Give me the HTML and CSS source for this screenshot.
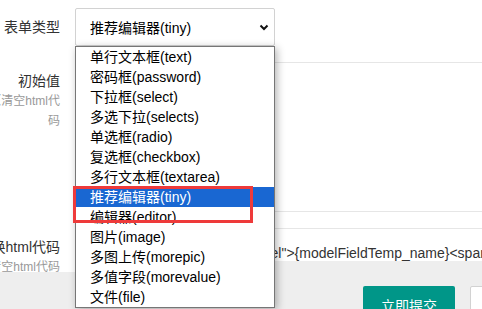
FILE: index.html
```html
<!DOCTYPE html>
<html lang="zh-CN">
<head>
    <meta charset="UTF-8">
    <title>字段设置</title>
    <link rel="stylesheet" href="styles.css">
</head>
<body>
    <div class="page">
        <form class="form">
            <div class="form-item">
                <label class="form-label">表单类型</label>
                <div class="input-block select-block">
                    <div class="select-box">
                        <span>推荐编辑器(tiny)</span>
                        <svg class="arrow" width="10" height="7" viewBox="0 0 10 7"><path d="M1.5 1.5 L5 5 L8.5 1.5" fill="none" stroke="#111" stroke-width="2"/></svg>
                    </div>
                    <ul class="select-options">
                        <li>单行文本框(text)</li>
                        <li>密码框(password)</li>
                        <li>下拉框(select)</li>
                        <li>多选下拉(selects)</li>
                        <li>单选框(radio)</li>
                        <li>复选框(checkbox)</li>
                        <li>多行文本框(textarea)</li>
                        <li class="selected">推荐编辑器(tiny)</li>
                        <li>编辑器(editor)</li>
                        <li>图片(image)</li>
                        <li>多图上传(morepic)</li>
                        <li>多值字段(morevalue)</li>
                        <li>文件(file)</li>
                    </ul>
                </div>
            </div>
            <div class="form-item">
                <label class="form-label">初始值<span class="form-tip">（清空html代码</span></label>
                <div class="input-block">
                    <div class="textarea"></div>
                </div>
            </div>
            <div class="form-item last">
                <label class="form-label">换html代码<span class="form-tip">清空html代码</span></label>
                <div class="input-block input-gray">
                    <div class="text-input">&lt;span class="model_field_label"&gt;{modelFieldTemp_name}&lt;span&gt;&lt;/span&gt;&lt;/span&gt;</div>
                </div>
            </div>
        </form>
        <div class="form-footer">
            <button type="button" class="btn">立即提交</button>
            <button type="button" class="btn btn-primary">重置</button>
        </div>
        <div class="mark"></div>
    </div>
</body>
</html>
```
FILE: styles.css
```css
body {
    margin: 0;
    font-family: "Liberation Sans", "Noto Sans CJK SC", sans-serif;
    font-size: 14px;
    color: #333;
    background: #fff;
    overflow: hidden;
}
.page {
    position: relative;
    height: 309px;
}
.form {
    margin: 0 0 0 -12px;
    padding-top: 8px;
}
.form-item {
    display: flex;
    margin-bottom: 16px;
}
.form-item.last {
    margin-bottom: 0;
    height: 44px;
}
.form-label {
    flex-shrink: 0;
    width: 72px;
    padding: 9px 15px 0 0;
    line-height: 20px;
    text-align: right;
}
.form-tip {
    display: block;
    font-size: 12px;
    line-height: 20px;
    color: #999;
}
.input-block {
    flex: 1;
    position: relative;
    min-width: 0;
}
.select-block {
    flex: 0 0 200px;
}
.select-box {
    height: 38px;
    box-sizing: border-box;
    border: 1px solid #d2d2d2;
    border-radius: 2px;
    display: flex;
    align-items: center;
    justify-content: space-between;
    padding: 0 5px 0 14px;
    color: #000;
}
.select-options {
    position: absolute;
    top: 38px;
    left: 0;
    width: 200px;
    box-sizing: border-box;
    margin: 0;
    padding: 0;
    list-style: none;
    background: #fff;
    border: 1px solid #767676;
    box-shadow: 2px 2px 8px rgba(0,0,0,0.3);
    z-index: 2;
}
.select-options li {
    height: 20px;
    line-height: 20px;
    padding-left: 14px;
    color: #000;
    white-space: nowrap;
}
.select-options li.selected {
    background: #1967d2;
    color: #fff;
}
.textarea {
    height: 148px;
    border: 1px solid #e6e6e6;
    border-right: none;
}
.input-gray {
    background: #eee;
}
.text-input {
    height: 33px;
    box-sizing: border-box;
    border-top: 1px solid #e6e6e6;
    padding: 14px 0 0 10px;
    line-height: 20px;
    white-space: nowrap;
    overflow-x: clip;
    background: #fff;
}
.form-footer {
    height: 25px;
    padding: 14px 0 0 363px;
    background: #eee;
    white-space: nowrap;
}
.btn {
    height: 38px;
    padding: 0 18px;
    border: none;
    border-radius: 2px;
    background: #009688;
    color: #fff;
    font-family: inherit;
    font-size: 14px;
    vertical-align: top;
}
.btn-primary {
    margin-left: 11px;
    background: #fff;
    color: #555;
    border: 1px solid #d2d2d2;
}
.mark {
    position: absolute;
    left: 73px;
    top: 186px;
    width: 174px;
    height: 31px;
    border: 3px solid #ee3a3a;
    z-index: 3;
}
```
